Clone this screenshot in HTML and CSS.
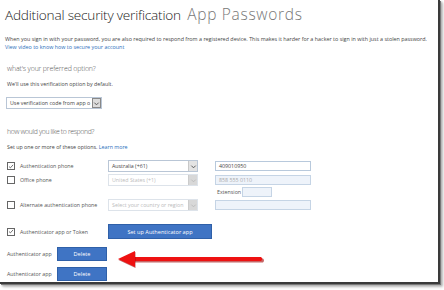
FILE: index.html
```html
<!DOCTYPE html>
<html>
<head>
<meta charset="utf-8">
<link rel="stylesheet" href="styles.css">
</head>
<body>
<div class="frame">
  <h1 class="title">Additional security verification <span class="sub">App Passwords</span></h1>
  <p class="desc">When you sign in with your password, you are also required to respond from a registered device. This makes it harder for a hacker to sign in with just a stolen password.<br><a class="link">View video to know how to secure your account</a></p>

  <h2 class="section">what's your preferred option?</h2>
  <p class="small">We'll use this verification option by default.</p>
  <div class="select pref"><span class="val">Use verification code from app o</span><span class="arrow"><svg viewBox="0 0 8 8" width="7" height="7"><path d="M1.5 3 L4 5.5 L6.5 3" fill="none" stroke="#555" stroke-width="1.1"/></svg></span></div>

  <h2 class="section s2">how would you like to respond?</h2>
  <p class="small s2p">Set up one or more of these options. <a class="link">Learn more</a></p>

  <div class="rows">
    <div class="row r1">
      <div class="opt"><span class="cb checked"><svg viewBox="0 0 8 8" width="7" height="7"><path d="M1.3 4 L3.2 5.8 L6.8 1.8" fill="none" stroke="#444" stroke-width="1"/></svg></span><span class="lbl">Authentication phone</span></div>
      <div class="select sel"><span class="val">Australia (+61)</span><span class="arrow"><svg viewBox="0 0 8 8" width="7" height="7"><path d="M1.5 3 L4 5.5 L6.5 3" fill="none" stroke="#555" stroke-width="1.1"/></svg></span></div>
      <div class="input">409010950</div>
    </div>
    <div class="row r2">
      <div class="opt"><span class="cb"></span><span class="lbl">Office phone</span></div>
      <div class="select sel dis"><span class="val">United States (+1)</span><span class="arrow"><svg viewBox="0 0 8 8" width="7" height="7"><path d="M1.5 3 L4 5.5 L6.5 3" fill="none" stroke="#bbb" stroke-width="1.1"/></svg></span></div>
      <div class="input dis">858 555 0110</div>
    </div>
    <div class="row ext">
      <span class="extlbl">Extension</span><div class="input dis extin"></div>
    </div>
    <div class="row r3">
      <div class="opt"><span class="cb"></span><span class="lbl">Alternate authentication phone</span></div>
      <div class="select sel dis"><span class="val">Select your country or region</span><span class="arrow"><svg viewBox="0 0 8 8" width="7" height="7"><path d="M1.5 3 L4 5.5 L6.5 3" fill="none" stroke="#bbb" stroke-width="1.1"/></svg></span></div>
      <div class="input dis"></div>
    </div>
    <div class="row r4">
      <div class="opt"><span class="cb checked"><svg viewBox="0 0 8 8" width="7" height="7"><path d="M1.3 4 L3.2 5.8 L6.8 1.8" fill="none" stroke="#444" stroke-width="1"/></svg></span><span class="lbl">Authenticator app or Token</span></div>
      <div class="btn setup">Set up Authenticator app</div>
    </div>
    <div class="row r5">
      <span class="applbl">Authenticator app</span><div class="btn del">Delete</div>
    </div>
    <div class="row r6">
      <span class="applbl">Authenticator app</span><div class="btn del">Delete</div>
    </div>
  </div>

  <svg class="annot" width="160" height="24" viewBox="0 0 160 24">
    <path d="M14 9.5 L146 9.5 Q148 11.5 146 13.5 L14 13.5 Z" fill="#a00000" transform="translate(0,1)" opacity="0.6"/>
    <path d="M14 9 L144 9 Q146.5 11 144 13 L14 13 Z" fill="#ee1111"/>
    <path d="M1 11 L18 3 L18 19 Z" fill="#a00000" transform="translate(0.5,1)" opacity="0.6"/>
    <path d="M1 11 L18 3 L18 19 Z" fill="#ee1111"/>
  </svg>
</div>
</body>
</html>
```
FILE: styles.css
```css
* { box-sizing: border-box; }
html, body { margin: 0; padding: 0; background: #fff; }
body {
  width: 444px;
  height: 290px;
  overflow: hidden;
  font-family: "Open Sans", "Noto Sans", sans-serif;
  color: #333;
}
.frame {
  position: relative;
  width: 440px;
  height: 284px;
  background: #fff;
  border-right: 2px solid #3a3a3a;
  border-bottom: 2px solid #3a3a3a;
  box-shadow: 1px 1px 0 #777, 2px 2px 2px #aaa, 3px 3px 3px #ccc;
  padding: 4px 0 0 5px;
}
.title {
  margin: 0;
  font-weight: 300;
  font-size: 13.6px;
  line-height: 20px;
  color: #222;
  letter-spacing: -0.2px;
  white-space: nowrap;
}
.title .sub {
  color: #777;
  font-size: 15.5px;
  letter-spacing: 0.7px;
  margin-left: 3px;
}
.desc {
  margin: 10px 0 0 0;
  font-size: 5.4px;
  line-height: 8px;
  color: #444;
  white-space: nowrap;
}
.link { color: #2a6ebb; }
.section {
  margin: 12px 0 0 2px;
  font-weight: 300;
  font-size: 7px;
  line-height: 11px;
  color: #555;
  letter-spacing: -0.15px;
}
.section.s2 { margin-top: 17px; font-size: 6.9px; letter-spacing: -0.35px; }
.small {
  margin: 6px 0 0 2px;
  font-size: 5.3px;
  line-height: 8px;
  color: #444;
}
.small.s2p { margin-top: 6px; }
.select {
  display: flex;
  align-items: stretch;
  height: 12px;
  border: 1px solid #b9c6d6;
  background: #fff;
  font-size: 5.3px;
  color: #444;
}
.select .val {
  flex: 1;
  display: flex;
  align-items: center;
  padding-left: 3px;
  white-space: nowrap;
  overflow: hidden;
}
.select .arrow {
  width: 9px;
  background: #e3e3e3;
  border-left: 1px solid #c8c8c8;
  display: flex;
  align-items: center;
  justify-content: center;
}
.select.pref {
  margin: 9px 0 0 1px;
  width: 96px;
}
.select.pref .arrow { background: #dcdcdc; border: 1px solid #888; }
.select.dis { color: #bbb; border-color: #dde3ea; }
.select.dis .arrow { background: #d8d8d8; border-left-color: #ccc; }
.rows {
  margin-top: 9px;
  display: flex;
  flex-direction: column;
}
.row {
  display: flex;
  align-items: center;
}
.opt {
  width: 103px;
  display: flex;
  align-items: center;
  padding-left: 2px;
}
.cb {
  width: 8px;
  height: 8px;
  border: 1px solid #666;
  background: #fff;
  display: flex;
  align-items: center;
  justify-content: center;
  margin-right: 5px;
}
.lbl, .applbl, .extlbl {
  font-size: 5.3px;
  color: #555;
  white-space: nowrap;
}
.sel { width: 90px; }
.input {
  margin-left: 17px;
  width: 96px;
  height: 10px;
  border: 1px solid #b8c9dc;
  background: #fff;
  font-size: 5.3px;
  color: #444;
  padding-left: 3px;
  display: flex;
  align-items: center;
}
.input.dis { background: #eef3fa; color: #aaa; border-color: #c5d4e5; }
.r1, .r2, .r3 { height: 12px; }
.r2 { margin-top: 2px; }
.ext { padding-left: 212px; height: 11px; }
.extin { margin-left: 1px; width: 30px; height: 10px; }
.r3 { margin-top: 2px; }
.r4 { margin-top: 13px; }
.btn {
  background: #3f74c4;
  color: #fff;
  font-size: 5.6px;
  display: flex;
  align-items: center;
  justify-content: center;
  border: 1px solid #2f60a8;
}
.setup { width: 104px; height: 15px; }
.r5 { margin-top: 8px; }
.r6 { margin-top: 6px; }
.applbl { width: 52px; padding-left: 2px; }
.del { width: 50px; height: 14px; }
.annot {
  position: absolute;
  left: 117px;
  top: 248px;
}
```
